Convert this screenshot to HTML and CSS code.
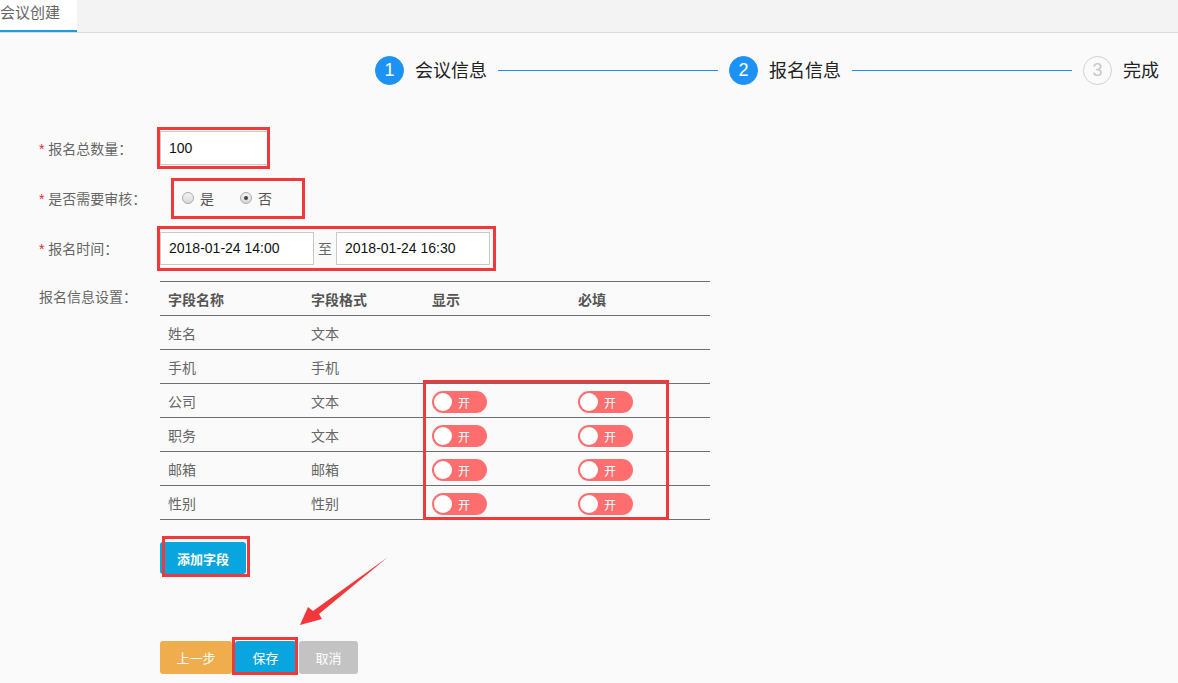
FILE: index.html
```html
<!DOCTYPE html>
<html lang="zh-CN">
<head>
  <meta charset="UTF-8">
  <title>会议创建</title>
  <link rel="stylesheet" href="styles.css">
</head>
<body>
  <div class="tabs">
    <div class="tab active">会议创建</div>
  </div>

  <div class="steps">
    <span class="step-num done">1</span>
    <span class="step-text">会议信息</span>
    <span class="step-line"></span>
    <span class="step-num done">2</span>
    <span class="step-text">报名信息</span>
    <span class="step-line"></span>
    <span class="step-num">3</span>
    <span class="step-text">完成</span>
  </div>

  <div class="form">
    <div class="row">
      <label class="label"><i>*</i> 报名总数量：</label>
      <span class="mark mark-count"><input type="text" class="field field-count" value="100"></span>
    </div>

    <div class="row">
      <label class="label"><i>*</i> 是否需要审核：</label>
      <span class="mark mark-radio">
        <span class="radio"></span><span class="radio-text">是</span>
        <span class="radio checked"></span><span class="radio-text">否</span>
      </span>
    </div>

    <div class="row">
      <label class="label"><i>*</i> 报名时间：</label>
      <span class="mark mark-time">
        <input type="text" class="field field-time" value="2018-01-24 14:00">
        <span class="to">至</span>
        <input type="text" class="field field-time" value="2018-01-24 16:30">
      </span>
    </div>

    <div class="row row-table">
      <label class="label">报名信息设置：</label>
      <div class="table-wrap">
        <table class="fields">
          <thead>
            <tr><th class="c1">字段名称</th><th class="c2">字段格式</th><th class="c3">显示</th><th class="c4">必填</th></tr>
          </thead>
          <tbody>
            <tr><td>姓名</td><td>文本</td><td></td><td></td></tr>
            <tr><td>手机</td><td>手机</td><td></td><td></td></tr>
            <tr><td>公司</td><td>文本</td><td><span class="switch"><b></b>开</span></td><td><span class="switch"><b></b>开</span></td></tr>
            <tr><td>职务</td><td>文本</td><td><span class="switch"><b></b>开</span></td><td><span class="switch"><b></b>开</span></td></tr>
            <tr><td>邮箱</td><td>邮箱</td><td><span class="switch"><b></b>开</span></td><td><span class="switch"><b></b>开</span></td></tr>
            <tr><td>性别</td><td>性别</td><td><span class="switch"><b></b>开</span></td><td><span class="switch"><b></b>开</span></td></tr>
          </tbody>
        </table>
        <div class="mark-switches"></div>

        <div class="add-row">
          <span class="mark mark-add"><button class="btn btn-blue btn-add">添加字段</button></span>
        </div>

        <div class="actions">
          <button class="btn btn-orange">上一步</button>
          <span class="mark mark-save"><button class="btn btn-blue btn-save">保存</button></span>
          <button class="btn btn-gray">取消</button>
        </div>
      </div>
    </div>
  </div>

  <svg class="arrow" width="100" height="80" viewBox="0 0 100 80">
    <polygon points="89,1 20,58 23,63 1,69 9,51 14,55" fill="#f2383a"/>
  </svg>
</body>
</html>
```

FILE: styles.css
```css
body {
  margin: 0;
  background-color: #fafafa;
  font-family: "Liberation Sans", "Noto Sans CJK SC", sans-serif;
  font-size: 14px;
  color: #666;
  position: relative;
  min-height: 683px;
}
.tabs {
  height: 32px;
  background-color: #f3f3f3;
  border-bottom: 1px solid #dcdcdc;
  display: flex;
}
.tab {
  width: 77px;
  height: 30px;
  line-height: 26px;
  font-size: 15px;
  color: #666;
}
.tab.active {
  background-color: #fff;
  border-bottom: 2px solid #1a9fdb;
}

/* steps */
.steps {
  display: flex;
  justify-content: flex-end;
  align-items: center;
  padding-right: 19px;
  margin-top: 23px;
  height: 29px;
}
.step-num {
  width: 27px;
  height: 27px;
  border-radius: 50%;
  border: 1px solid #d0d0d0;
  color: #c8c8c8;
  font-size: 18px;
  line-height: 27px;
  text-align: center;
  margin-right: 11px;
}
.step-num.done {
  background-color: #1d92f5;
  border-color: #1d92f5;
  color: #fff;
}
.step-text {
  font-size: 18px;
  color: #222;
  padding-bottom: 3px;
}
.step-line {
  width: 220px;
  height: 1px;
  background-color: #1d92f5;
  margin: 0 11px;
}

/* form */
.form {
  padding-left: 39px;
  margin-top: 38px;
}
.row {
  display: flex;
  align-items: center;
  height: 50px;
}
.label {
  width: 121px;
  flex: none;
  color: #666;
}
.label i {
  font-style: normal;
  color: #e8252a;
}
.mark {
  position: relative;
  display: inline-flex;
  align-items: center;
}
.mark::after {
  content: "";
  position: absolute;
  border: 3px solid #f2383a;
  pointer-events: none;
}
.field {
  box-sizing: border-box;
  border: 1px solid #c9c9c9;
  background-color: #fff;
  font-family: "Liberation Sans", sans-serif;
  font-size: 14px;
  color: #111;
  padding: 0 8px;
  margin: 0;
  outline: none;
}
.field-count {
  width: 108px;
  height: 34px;
}
.mark-count::after {
  top: -4px; left: -3px; right: -2px; bottom: -4px;
}
.mark-radio {
  margin-left: 22px;
  height: 18px;
}
.mark-radio::after {
  top: -11px; left: -11px; right: -33px; bottom: -12px;
}
.radio {
  width: 10px;
  height: 10px;
  border-radius: 50%;
  border: 1px solid #aaa;
  background: linear-gradient(#f4f4f4, #d8d8d8);
  position: relative;
  margin-right: 6px;
}
.radio.checked::after {
  content: "";
  position: absolute;
  width: 4px;
  height: 4px;
  border-radius: 50%;
  background-color: #444;
  top: 3px;
  left: 3px;
}
.radio-text {
  color: #555;
  margin-right: 26px;
}
.radio-text:last-child {
  margin-right: 0;
}
.field-time {
  width: 154px;
  height: 33px;
}
.to {
  margin: 0 4px;
  color: #666;
}
.mark-time::after {
  top: -6px; left: -3px; right: -6px; bottom: -6px;
}

/* table */
.row-table {
  align-items: flex-start;
  height: auto;
  margin-top: 8px;
}
.row-table .label {
  line-height: 32px;
}
.table-wrap {
  position: relative;
}
.fields {
  width: 550px;
  border-collapse: collapse;
  border-top: 1px solid #6e6e6e;
}
.fields th,
.fields td {
  height: 33px;
  padding: 0 0 0 8px;
  border-bottom: 1px solid #6e6e6e;
  text-align: left;
  color: #666;
  font-weight: normal;
}
.fields th {
  font-weight: bold;
  color: #555;
}
.fields .c1 { width: 135px; }
.fields .c2 { width: 113px; }
.fields .c3 { width: 138px; }
.switch {
  display: inline-flex;
  align-items: center;
  width: 55px;
  height: 22px;
  border-radius: 11px;
  background-color: #ff6e6e;
  color: #fff;
  font-size: 12px;
  vertical-align: middle;
  margin-top: 3px;
}
.switch b {
  width: 18px;
  height: 18px;
  border-radius: 50%;
  background-color: #fff;
  margin: 0 6px 0 2px;
}
.mark-switches {
  position: absolute;
  left: 263px;
  top: 99px;
  width: 240px;
  height: 134px;
  border: 3px solid #f2383a;
}

/* buttons */
.btn {
  border: none;
  border-radius: 3px;
  height: 33px;
  padding: 0;
  color: #fff;
  font-family: "Liberation Sans", "Noto Sans CJK SC", sans-serif;
  font-size: 13px;
  cursor: pointer;
}
.btn-blue {
  background-color: #09a5de;
}
.btn-orange {
  background-color: #f0ad4e;
  width: 72px;
}
.btn-gray {
  background-color: #c3c3c3;
  width: 59px;
  margin-left: 3px;
}
.add-row {
  margin-top: 22px;
}
.btn-add {
  width: 86px;
  height: 32px;
  font-weight: bold;
}
.mark-add::after {
  top: -6px; left: 2px; right: -4px; bottom: -3px;
}
.actions {
  margin-top: 67px;
  display: flex;
}
.btn-save {
  width: 61px;
  margin-left: 3px;
}
.mark-save::after {
  top: -4px; left: 0; right: -2px; bottom: -1px;
}
.arrow {
  position: absolute;
  left: 299px;
  top: 556px;
}
```
